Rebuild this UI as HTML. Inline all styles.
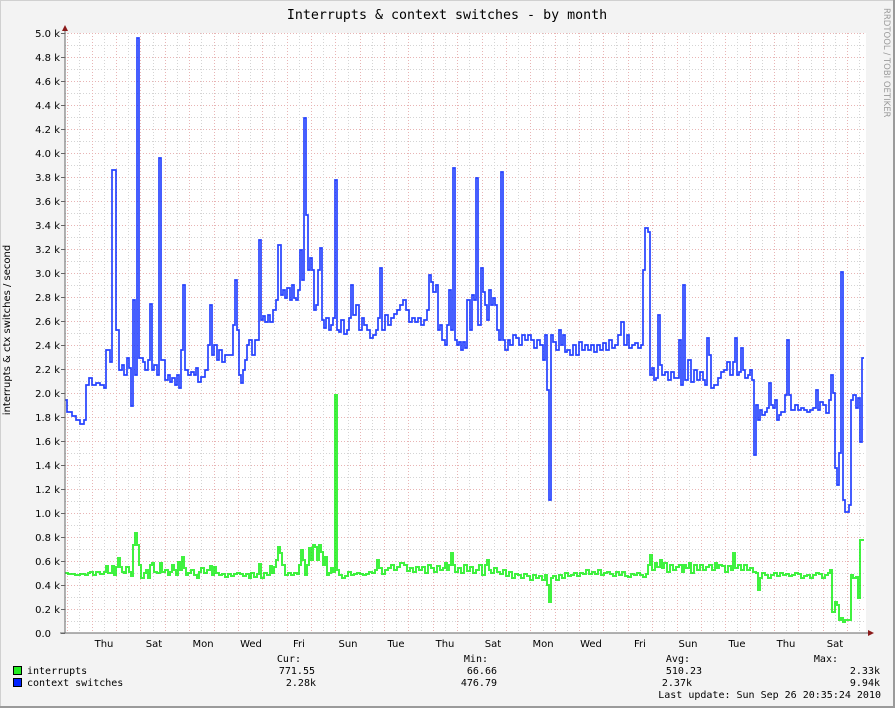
<!DOCTYPE html>
<html><head><meta charset="utf-8"><style>
html,body{margin:0;padding:0;background:#f3f3f3;}
svg{display:block;}
.t{font-family:"DejaVu Sans Mono","Liberation Mono",monospace;}
.a{font-family:"DejaVu Sans","Liberation Sans",sans-serif;font-size:10px;fill:#000;}
</style></head><body>
<svg width="895" height="708" viewBox="0 0 895 708" xmlns="http://www.w3.org/2000/svg">
<rect x="0" y="0" width="895" height="708" fill="#f3f3f3"/>
<rect x="0.5" y="0.5" width="894" height="707" fill="none" stroke="#d0d0d0"/>
<line x1="0" y1="707" x2="895" y2="707" stroke="#9a9a9a" stroke-width="2"/>
<line x1="894" y1="0" x2="894" y2="708" stroke="#9a9a9a" stroke-width="2"/>
<rect x="65" y="33" width="801" height="600" fill="#fff"/>
<g id="grid"></g>
<text class="t" x="447" y="19" font-size="13.3" text-anchor="middle">Interrupts &amp; context switches - by month</text>
<text x="884" y="8" transform="rotate(90 884 8)" font-family="DejaVu Sans,Liberation Sans,sans-serif" font-size="8.5" fill="#9a9a9a">RRDTOOL / TOBI OETIKER</text>
<text x="10" y="330" transform="rotate(-90 10 330)" class="a" font-size="9" text-anchor="middle">interrupts &amp; ctx switches / second</text>
<g id="ylab" class="a" text-anchor="end"></g>
<g class="a" text-anchor="middle">
<text x="104" y="647">Thu</text><text x="154" y="647">Sat</text><text x="203" y="647">Mon</text><text x="251" y="647">Wed</text><text x="299" y="647">Fri</text><text x="348" y="647">Sun</text><text x="396" y="647">Tue</text><text x="445" y="647">Thu</text><text x="493" y="647">Sat</text><text x="543" y="647">Mon</text><text x="591" y="647">Wed</text><text x="640" y="647">Fri</text><text x="688" y="647">Sun</text><text x="737" y="647">Tue</text><text x="786" y="647">Thu</text><text x="835" y="647">Sat</text>
</g>
<path fill="none" stroke="#00ee00" stroke-opacity="0.75" stroke-width="2" d="M65,573 H68V574 H75V575 H80V574 H85V575 H88V573 H90V572 H93V575 H96V572 H100V574 H104V572 H106V566 H108V573 H112V566 H114V575 H116V567 H118V558 H120V567 H122V572 H124V573 H126V567 H129V572 H131V576 H133V545 H135V533 H137V545 H139V565 H141V578 H144V573 H146V570 H148V578 H150V565 H152V563 H154V572 H157V573 H160V563 H162V572 H165V570 H168V575 H170V572 H172V565 H174V570 H176V575 H178V562 H180V570 H182V557 H184V568 H186V575 H188V573 H191V570 H194V575 H197V578 H199V572 H201V568 H204V573 H207V570 H210V566 H212V575 H214V567 H216V573 H219V575 H222V574 H225V577 H228V574 H231V576 H234V574 H237V573 H240V574 H243V576 H246V574 H249V578 H251V573 H254V577 H257V574 H259V564 H261V578 H264V573 H267V575 H270V566 H272V573 H274V567 H276V560 H278V547 H280V553 H282V565 H285V575 H288V573 H291V575 H294V573 H297V574 H299V565 H301V550 H303V560 H305V575 H307V565 H309V548 H311V560 H313V545 H315V547 H317V560 H319V545 H321V552 H323V565 H325V557 H327V575 H329V573 H331V568 H333V572 H335V395 H337V570 H339V575 H342V578 H345V576 H348V572 H351V575 H354V574 H357V573 H360V574 H363V575 H366V574 H369V572 H372V573 H375V570 H377V560 H379V568 H382V574 H385V570 H388V568 H391V565 H394V570 H397V567 H400V563 H404V565 H407V571 H410V568 H413V572 H416V567 H419V570 H422V567 H425V573 H428V565 H431V568 H434V572 H437V566 H440V570 H443V568 H445V563 H447V570 H449V565 H451V553 H453V565 H455V572 H458V568 H461V573 H464V565 H467V571 H470V567 H473V573 H476V570 H479V565 H482V575 H485V565 H487V560 H489V570 H491V573 H494V568 H497V572 H500V574 H503V570 H506V576 H509V572 H512V578 H515V574 H518V575 H521V578 H524V574 H527V576 H530V580 H533V575 H536V578 H539V576 H542V580 H545V575 H547V585 H549V602 H551V578 H553V576 H556V580 H559V575 H562V578 H565V573 H568V576 H571V575 H574V573 H577V576 H580V573 H583V574 H586V570 H589V574 H592V572 H595V574 H598V570 H601V575 H604V573 H607V572 H610V574 H613V576 H616V572 H619V575 H622V572 H625V576 H628V577 H631V574 H634V575 H637V573 H640V575 H643V577 H646V574 H648V565 H650V555 H652V570 H655V563 H657V567 H660V560 H662V568 H664V563 H667V572 H670V565 H673V570 H676V567 H679V565 H682V572 H684V565 H686V568 H689V563 H691V573 H694V565 H697V570 H700V565 H703V570 H706V567 H709V565 H712V570 H715V563 H717V568 H719V565 H722V566 H725V572 H728V566 H731V570 H733V553 H735V568 H738V565 H741V570 H744V565 H747V570 H750V568 H753V572 H756V573 H758V590 H760V578 H762V573 H765V575 H768V578 H771V575 H774V573 H777V576 H780V573 H783V575 H786V574 H789V576 H792V575 H795V573 H798V574 H801V578 H804V576 H807V575 H810V578 H813V575 H816V573 H819V574 H822V578 H825V575 H828V573 H830V570 H832V612 H835V602 H837V605 H839V620 H841V618 H843V622 H845V620 H849V620 H851V575 H853V578 H856V577 H858V598 H860V540 H864"/>
<path fill="none" stroke="#0022ff" stroke-opacity="0.85" stroke-width="1.7" d="M65,400 H67V412 H72V416 H76V420 H80V424 H84V420 H86V385 H89V378 H92V385 H96V383 H100V385 H104V388 H106V350 H110V362 H112V170 H116V330 H117V330 H119V370 H122V365 H124V375 H127V358 H129V368 H131V406 H133V300 H135V375 H137V38 H139V358 H143V362 H145V370 H148V360 H150V304 H152V370 H154V365 H157V375 H159V158 H161V360 H165V380 H168V375 H170V382 H172V378 H175V385 H177V375 H179V388 H181V350 H183V285 H185V370 H188V375 H191V372 H194V375 H196V368 H198V382 H201V377 H205V370 H208V345 H210V305 H212V355 H214V345 H217V360 H219V350 H222V362 H225V355 H229V355 H233V325 H235V280 H237V330 H239V375 H241V383 H243V370 H245V360 H247V345 H249V340 H252V355 H255V340 H259V240 H261V320 H263V316 H265V322 H268V315 H270V322 H273V310 H276V300 H278V245 H281V295 H283V290 H285V298 H287V288 H290V300 H292V285 H294V298 H296V300 H298V290 H300V250 H302V280 H304V118 H306V215 H308V270 H310V258 H312V270 H314V310 H316V305 H318V270 H320V248 H322V320 H324V328 H326V318 H329V330 H331V325 H333V318 H335V180 H337V330 H339V332 H341V320 H344V334 H347V330 H349V318 H351V285 H353V315 H356V305 H359V330 H362V318 H364V325 H367V330 H370V338 H373V335 H376V330 H378V318 H380V268 H382V330 H385V315 H388V325 H391V318 H394V314 H397V310 H400V305 H403V300 H406V310 H409V322 H412V318 H415V322 H418V318 H421V325 H424V320 H427V310 H429V275 H431V282 H433V292 H436V285 H438V330 H440V325 H442V340 H445V345 H447V325 H449V290 H451V330 H453V168 H455V340 H457V345 H459V342 H461V350 H463V342 H465V348 H467V300 H470V330 H472V295 H474V300 H476V178 H478V325 H481V268 H483V292 H485V305 H487V320 H489V290 H491V305 H493V298 H495V305 H497V330 H499V340 H501V172 H503V340 H505V350 H508V340 H510V345 H513V335 H516V338 H519V345 H522V335 H525V340 H528V335 H531V340 H534V348 H537V340 H540V345 H543V360 H545V335 H547V390 H549V500 H551V335 H553V342 H556V350 H559V330 H561V345 H563V335 H565V352 H567V350 H570V355 H573V345 H576V355 H579V342 H582V350 H585V345 H588V350 H591V345 H594V352 H597V345 H600V350 H603V343 H606V350 H609V340 H612V348 H615V345 H618V335 H621V322 H624V345 H627V335 H629V348 H632V345 H635V343 H638V348 H641V345 H643V270 H645V228 H648V232 H650V375 H652V368 H654V380 H656V378 H658V315 H660V365 H662V375 H665V372 H668V380 H671V372 H674V378 H677V378 H679V340 H681V385 H683V285 H685V380 H688V360 H691V382 H694V370 H697V380 H700V372 H703V380 H705V385 H707V338 H709V355 H711V388 H714V385 H716V385 H718V378 H721V372 H724V370 H727V362 H730V375 H733V362 H735V338 H737V375 H739V372 H741V348 H743V370 H745V378 H748V375 H750V370 H752V380 H754V455 H756V405 H758V420 H760V410 H762V415 H765V412 H767V408 H769V383 H771V405 H773V408 H775V400 H777V420 H779V415 H781V412 H785V395 H787V340 H789V395 H791V410 H795V405 H798V410 H801V408 H804V410 H807V412 H810V410 H813V408 H816V390 H818V410 H820V402 H823V405 H826V413 H829V400 H831V375 H833V393 H835V468 H837V485 H839V453 H841V272 H843V500 H845V512 H849V505 H851V400 H853V395 H856V408 H858V398 H860V442 H862V358 H864"/>
<line x1="65" y1="633" x2="65" y2="30" stroke="#666" stroke-width="1"/>
<line x1="60" y1="633" x2="868" y2="633" stroke="#666" stroke-width="1"/>
<polygon points="62,31 68,31 65,25" fill="#8b1a1a"/>
<polygon points="868,630 868,636 874,633" fill="#8b1a1a"/>
<rect x="13.5" y="666.5" width="8" height="8" fill="#22ee22" stroke="#000"/>
<rect x="13.5" y="678.5" width="8" height="8" fill="#0022ff" stroke="#000"/>
<g class="t" font-size="10" fill="#000">
<text x="27" y="674">interrupts</text>
<text x="27" y="686">context switches</text>
<g text-anchor="end">
<text x="301" y="662">Cur:</text><text x="315" y="674">771.55</text><text x="316" y="686">2.28k</text>
<text x="488" y="662">Min:</text><text x="497" y="674">66.66</text><text x="497" y="686">476.79</text>
<text x="690" y="662">Avg:</text><text x="702" y="674">510.23</text><text x="692" y="686">2.37k</text>
<text x="838" y="662">Max:</text><text x="880" y="674">2.33k</text><text x="880" y="686">9.94k</text>
<text x="881" y="698">Last update: Sun Sep 26 20:35:24 2010</text>
</g></g>
<script>
(function(){var ns="http://www.w3.org/2000/svg",g=document.getElementById("grid"),yl=document.getElementById("ylab");
function L(x1,y1,x2,y2,c){var l=document.createElementNS(ns,"line");l.setAttribute("x1",x1);l.setAttribute("y1",y1);l.setAttribute("x2",x2);l.setAttribute("y2",y2);l.setAttribute("stroke",c);l.setAttribute("stroke-width","1");l.setAttribute("stroke-dasharray","1,2");g.appendChild(l);}
for(var i=1;i<=50;i++){var y=633-i*12+0.5;L(65,y,866,y,i%2==0?"#e8b4b4":"#d4d4d4");}
for(var k=0;k<66;k++){var x=67.3+k*12.185;if(x>866)break;x=Math.round(x)+0.5;L(x,33,x,633,k%2==0?"#e8b4b4":"#d4d4d4");}
for(var j=0;j<=25;j++){var v=(j*0.2).toFixed(1);var t=document.createElementNS(ns,"text");t.setAttribute("x",j==0?"51":"60");t.setAttribute("y",633-j*24+4);t.textContent=j==0?"0.0":v+" k";yl.appendChild(t);
var m=document.createElementNS(ns,"line");m.setAttribute("x1",61);m.setAttribute("x2",65);m.setAttribute("y1",633-j*24+0.5);m.setAttribute("y2",633-j*24+0.5);m.setAttribute("stroke","#666");g.appendChild(m);}
})();
</script>
</svg>
</body></html>
